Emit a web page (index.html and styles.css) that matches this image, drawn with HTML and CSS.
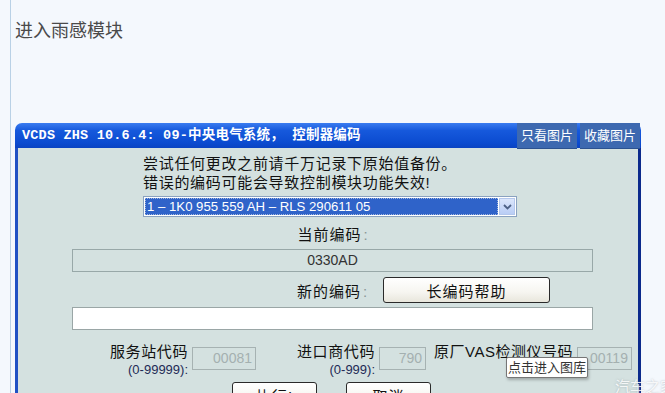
FILE: index.html
```html
<!DOCTYPE html>
<html lang="zh-CN">
<head>
  <meta charset="UTF-8">
  <title>进入雨感模块</title>
  <link rel="stylesheet" href="styles.css">
</head>
<body>
  <div class="page">
    <h1 class="post-title">进入雨感模块</h1>

    <div class="shot">
      <div class="win">
        <div class="win-title">VCDS ZHS 10.6.4: 09-中央电气系统， 控制器编码</div>
        <div class="win-body">
          <div class="col">
            <p class="warn">尝试任何更改之前请千万记录下原始值备份。<br>错误的编码可能会导致控制模块功能失效!</p>

            <div class="select">
              <span class="select-val">1 – 1K0 955 559 AH – RLS 290611 05</span>
              <span class="select-btn">
                <svg width="9" height="6" viewBox="0 0 9 6"><path d="M1 1 L4.5 4.5 L8 1" fill="none" stroke="#4d6185" stroke-width="1.8"/></svg>
              </span>
            </div>

            <div class="lbl-center">当前编码<span class="colon">:</span></div>
            <div class="field ro">0330AD</div>

            <div class="new-row">
              <span class="lbl">新的编码<span class="colon">:</span></span>
              <button class="btn help">长编码帮助</button>
            </div>
            <div class="field edit"></div>

            <div class="codes">
              <div class="code code-ws">
                <div class="code-lbl">服务站代码<small>(0-99999):</small></div>
                <div class="code-in w64">00081</div>
              </div>
              <div class="code code-imp">
                <div class="code-lbl">进口商代码<small>(0-999):</small></div>
                <div class="code-in w47">790</div>
              </div>
              <div class="code code-vas">
                <div class="code-lbl">原厂VAS检测仪号码</div>
                <div class="code-in w55">00119</div>
              </div>
            </div>

            <div class="actions">
              <button class="btn act">执行!</button>
              <button class="btn act">取消</button>
            </div>
          </div>
        </div>
      </div>

      <div class="shot-tools">
        <a class="tool">只看图片</a>
        <a class="tool">收藏图片</a>
      </div>
      <div class="tip">点击进入图库</div>
      <div class="mark">汽车之家</div>
    </div>
  </div>
</body>
</html>
```

FILE: styles.css
```css
body {
  margin: 0;
  background: #f4f8fd;
  font-family: "Liberation Sans", "Noto Sans CJK SC", sans-serif;
  overflow: hidden;
}
.page {
  margin-left: 10px;
  border-left: 1px solid #b9d1e6;
  height: 393px;
  padding: 18px 0 0 4px;
  box-sizing: border-box;
}
.post-title {
  margin: 0;
  font-size: 18px;
  font-weight: normal;
  line-height: 26px;
  color: #4a4a4a;
}
.shot {
  position: relative;
  margin-top: 79px;
  width: 626px;
}
.win {
  border-radius: 7px 7px 0 0;
  overflow: hidden;
}
.win-title {
  height: 25px;
  line-height: 25px;
  padding-left: 7px;
  background: linear-gradient(#3a7cf0, #1659dc 30%, #0b4bd0 80%, #0a43c2);
  color: #fff;
  font-family: "Liberation Mono", "Noto Sans CJK SC", monospace;
  font-size: 13.5px;
  font-weight: bold;
  letter-spacing: 0.2px;
  white-space: nowrap;
}
.win-body {
  background: #d4e1e0;
  border-left: 3px solid #1f51c4;
  border-right: 3px solid #0b2a8c;
  height: 260px;
  padding: 6px 0 0 54px;
}
.col {
  width: 521px;
}
.warn {
  margin: 0 0 0 71px;
  font-size: 15px;
  line-height: 19px;
  letter-spacing: 0.7px;
  color: #111;
}
.select {
  margin: 4px 0 0 71px;
  width: 374px;
  height: 21px;
  box-sizing: border-box;
  border: 1px solid #8aa2c0;
  background: #fff;
  display: flex;
  padding: 1px;
}
.select-val {
  flex: 1;
  background: #2f63c9;
  outline: 1px dotted #9fb6e0;
  outline-offset: -1px;
  color: #fff;
  font-size: 13.2px;
  line-height: 17px;
  padding-left: 2px;
  white-space: nowrap;
}
.select-btn {
  width: 16px;
  margin-left: 1px;
  background: linear-gradient(#dbe6fb, #b9cdf5);
  border: 1px solid #b4c7ec;
  box-sizing: border-box;
  display: flex;
  align-items: center;
  justify-content: center;
}
.colon {
  color: #8a9696;
  margin-left: 2px;
  letter-spacing: 0;
}
.lbl-center {
  margin-top: 8px;
  text-align: center;
  font-size: 15px;
  line-height: 20px;
  letter-spacing: 1px;
  color: #111;
}
.field {
  height: 23px;
  box-sizing: border-box;
  border: 1px solid #98a8a8;
  font-size: 14px;
  line-height: 21px;
  text-align: center;
  color: #333;
}
.field.ro {
  margin-top: 4px;
  background: #d4e1e0;
}
.field.edit {
  margin-top: 4px;
  background: #fff;
  border-color: #9aa6a6;
}
.new-row {
  margin-top: 5px;
  display: flex;
  align-items: center;
  padding-left: 225px;
  height: 26px;
}
.lbl {
  font-size: 15px;
  letter-spacing: 1px;
  color: #111;
  width: 86px;
}
.btn {
  font-family: inherit;
  font-size: 15px;
  letter-spacing: 1px;
  color: #111;
  border: 1px solid #2a2a2a;
  border-radius: 3px;
  background: linear-gradient(#ffffff, #f6f5f0 60%, #e8e6dc);
  padding: 0;
  cursor: pointer;
}
.help {
  width: 167px;
  height: 26px;
}
.codes {
  margin-top: 13px;
  display: flex;
  height: 36px;
}
.code {
  display: flex;
  align-items: flex-start;
}
.code-ws { margin-left: 38px; }
.code-imp { margin-left: 41px; }
.code-vas { margin-left: 8px; }
.code-lbl {
  display: flex;
  flex-direction: column;
  align-items: flex-end;
  font-size: 15px;
  line-height: 18px;
  letter-spacing: 0.6px;
  color: #111;
  white-space: nowrap;
}
.code-vas .code-lbl {
  letter-spacing: 0.5px;
}
.code-lbl small {
  font-size: 13px;
  letter-spacing: 0;
  color: #1d2a55;
}
.code-in {
  margin: 4px 0 0 4px;
  height: 23px;
  box-sizing: border-box;
  border: 1px solid #a6b2b2;
  background: #d4e1e0;
  text-align: right;
  padding-right: 3px;
  font-size: 14px;
  line-height: 21px;
  color: #a4b0b0;
}
.w64 { width: 64px; }
.w47 { width: 47px; }
.w55 { width: 55px; }
.actions {
  margin-top: 3px;
  display: flex;
  padding-left: 160px;
  gap: 29px;
}
.act {
  width: 85px;
  height: 26px;
}
.shot-tools {
  position: absolute;
  top: 0;
  right: 1px;
  display: flex;
  gap: 3px;
}
.tool {
  width: 60px;
  height: 25px;
  line-height: 25px;
  text-align: center;
  background: #3d69b0;
  border-bottom: 1px solid #2c5290;
  color: #fff;
  font-size: 13px;
}
.tip {
  position: absolute;
  left: 491px;
  top: 234px;
  width: 82px;
  height: 21px;
  box-sizing: border-box;
  border: 1px solid #767676;
  border-radius: 2px;
  background: #fff;
  box-shadow: 1px 2px 3px rgba(0, 0, 0, 0.25);
  font-size: 13px;
  line-height: 19px;
  text-align: center;
  color: #333;
}
.mark {
  position: absolute;
  left: 600px;
  top: 252px;
  font-size: 15px;
  color: rgba(255, 255, 255, 0.85);
  text-shadow: 0 0 2px rgba(120, 130, 140, 0.5);
  white-space: nowrap;
}
```
